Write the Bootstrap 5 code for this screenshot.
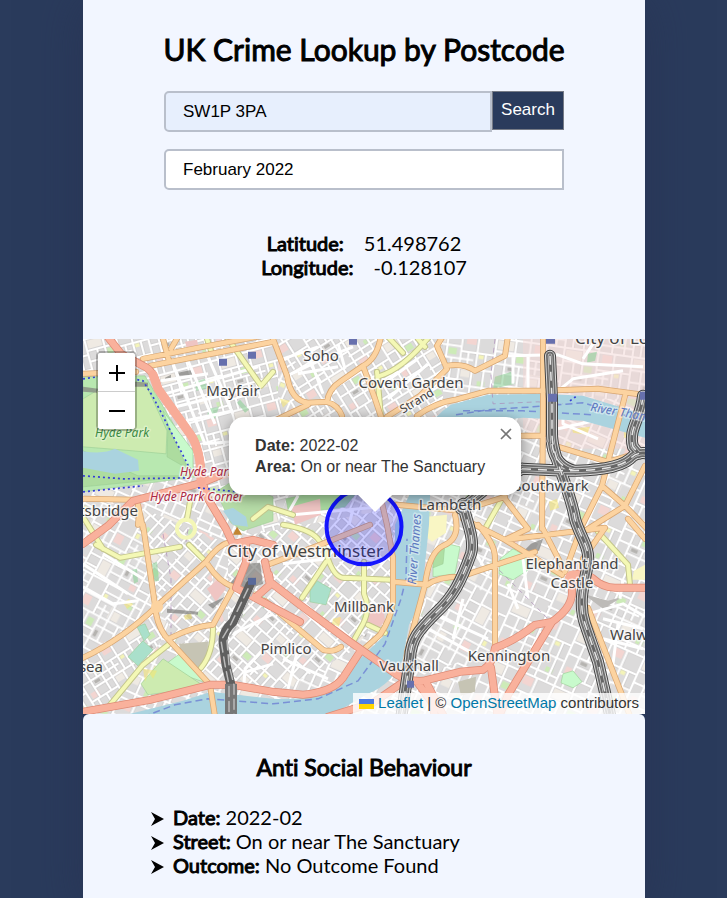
<!DOCTYPE html>
<html lang="en">
<head>
<meta charset="utf-8">
<meta name="viewport" content="width=device-width, initial-scale=1">
<title>UK Crime Lookup by Postcode</title>
<link href="https://cdn.jsdelivr.net/npm/bootstrap@5.3.0/dist/css/bootstrap.min.css" rel="stylesheet">
<style>
  body { background: #2a3b5c; color: #000; font: 400 20px/24px Lato, "Liberation Sans", sans-serif; font-variant-ligatures: none; padding: 0 82px 0 83px; }
  .panel { background: #f2f6ff; }
  .shell { box-shadow: 0 0 48px rgba(40, 48, 80, .6); }
  .faux { font-weight: 400; -webkit-text-stroke: 1px #000; }
  .lookup-head { padding: 30px 24px 60px; }
  .page-title { font-size: 30px; line-height: 38px; margin-bottom: 23px; }
  .lookup-form { max-width: 400px; gap: 17px; }
  .field { height: 41px; border: 2px solid #b9bfcb; border-radius: 5px 0 0 5px; padding: 0 17px; color: #000; font: 17px/20px "Liberation Sans", Arial, sans-serif; background: #fff; min-width: 0; }
  .field-filled { background: #e7effd; }
  .go { height: 39px; width: 72px; border: 1px solid #767b86; background: #2a3b5c; color: #fff; font: 17px/20px "Liberation Sans", Arial, sans-serif; padding: 0 0 2px; }
  .coords { margin-top: 41px; }
  .coords dl, .coords dd, .coords dt { margin: 0; }
  .coords dd { padding-left: 20px; }
  .map { aspect-ratio: 3 / 2; overflow: hidden; font-family: "Liberation Sans", Arial, sans-serif; }
  .zoomer { top: 12px; left: 13px; width: 41px; border: 2px solid rgba(0,0,0,.25); border-radius: 5px; background-clip: padding-box; background-color: #fff; overflow: hidden; }
  .zoomer button { height: 38px; border: 0; background: #fff; padding: 0 0 2px; }
  .zoomer button + button { border-top: 1px solid #ccc; }
  .bubble { left: 26%; top: 78px; width: 292px; padding: 18px 26px; border-radius: 15px; background: #fff; color: #333; box-shadow: 0 3px 14px rgba(0,0,0,.4); font-size: 16px; line-height: 21px; }
  .bubble-tip { top: 100%; left: 50%; width: 34px; height: 17px; margin-left: -17px; background: #fff; clip-path: polygon(0 0, 100% 0, 50% 100%); }
  .bubble-close { top: 7px; right: 5px; width: 20px; height: 20px; border: 0; background: none; padding: 0; line-height: 0; }
  .credit { right: 0; bottom: 0; background: rgba(255,255,255,.8); color: #333; font-size: 15px; line-height: 18px; padding: 1px 6px 2px; }
  .credit a { color: #0078a8; text-decoration: none; }
  .results { background: #2a3b5c; }
  .crime { border-radius: 6px 6px 0 0; padding: 39px 68px 20px; min-height: 200px; }
  .crime h2 { font-size: 23px; line-height: 29px; margin-bottom: 23px; }
  .crime li { gap: 9px; }
  .arrow { flex: none; width: 13px; height: 15px; margin-top: 6px; }
  .minor-edge { fill: none; stroke: #cbc9c9; stroke-width: 3; }
  .minor { fill: none; stroke: #fff; stroke-width: 2; }
  .lane { fill: none; stroke: #fff; stroke-width: 3; stroke-linejoin: round; }
  .road-line { fill: none; stroke-linecap: round; stroke-linejoin: round; }
  .place { font-family: "Noto Sans", sans-serif; font-size: 15px; fill: #444; stroke: #fff; stroke-opacity: .7; stroke-width: 3px; paint-order: stroke; stroke-linejoin: round; }
  .place-main { font-size: 17px; }
  .place-note { font-size: 12px; font-style: italic; }
  .place-park { fill: #3b8a45; stroke-opacity: .3; }
  .place-stop { fill: #ac2943; }
  .place-river { fill: #5d78c0; stroke-opacity: .4; }
  .place-street { font-size: 12px; }
</style>
<script src="https://cdn.jsdelivr.net/npm/bootstrap@5.3.0/dist/js/bootstrap.bundle.min.js" defer></script>
</head>
<body>
<main class="shell panel min-vh-100">
  <header class="lookup-head">
    <h1 class="page-title faux text-center">UK Crime Lookup by Postcode</h1>
    <form class="lookup-form d-flex flex-column mx-auto">
      <div class="d-flex align-items-start">
        <input class="field field-filled flex-grow-1" type="text" value="SW1P 3PA" aria-label="Postcode">
        <button class="go flex-shrink-0" type="button">Search</button>
      </div>
      <input class="field w-100" type="text" value="February 2022" aria-label="Month">
    </form>
    <div class="coords">
      <dl class="d-flex justify-content-center"><dt class="faux">Latitude:</dt><dd>51.498762</dd></dl>
      <dl class="d-flex justify-content-center"><dt class="faux">Longitude:</dt><dd>-0.128107</dd></dl>
    </div>
  </header>

  <section class="map position-relative" aria-label="Crime map">
    <svg class="d-block w-100 h-100" viewBox="0 0 562 375" preserveAspectRatio="xMidYMid slice" role="img" aria-label="Map of central London">
      <defs>
        <path id="streets" d="M0 1h62M0 13h32M32 17h30M0 24h44M12 32h50M0 43h33M30 48h32M1 0v54M11 13v30M19 0v24M24 24v20M32 0v54M39 17v13M47 0v32M44 32v22M55 17v37M8 43v11M18 43v11"/>
        <pattern id="grid" width="62" height="54" patternUnits="userSpaceOnUse">
          <rect width="62" height="54" fill="#dcdbdb"/>
          <path fill="#efeae3" d="M2 2h16v9H2zM34 30h12v10H34z"/><path fill="#cdebb8" d="M20 15h8v6h-8zM50 42h7v7h-7z"/><path fill="#f3d5d1" d="M36 2h9v8h-9zM4 35h9v6H4z"/><path fill="#f4f4b8" d="M48 18h5v4h-5z"/><path fill="#b5b3b0" d="M14 26h6v3h-6z"/>
          <use href="#streets" class="minor-edge"/><use href="#streets" class="minor"/>
        </pattern>
        <pattern id="g1" href="#grid" patternTransform="rotate(-15)"/>
        <pattern id="g2" href="#grid" patternTransform="rotate(-32)"/>
        <pattern id="g3" href="#grid" patternTransform="rotate(42)"/>
        <pattern id="g4" href="#grid" patternTransform="rotate(24) scale(1.15)"/>
        <pattern id="g5" href="#grid" patternTransform="rotate(-62) scale(1.1)"/>
        <pattern id="g6" href="#grid" patternTransform="rotate(8) scale(1.1)"/>
        <path id="red" d="M24-3 38 15 60 27Q71 31 75 50L107 95Q118 110 119 144L50 162 25 187 0 205M120 145 125 160 143 190 150 205 170 201 190 206M163 205 163 223 153 249 172 259 187 246 182 223M172 259 217 283M186 236 187 243 217 266 267 303 314 336Q326 343 340 342L377 333 400 331Q410 325 412 309Q430 303 452 286L469 283Q488 270 489 255V236Q500 233 509 239 520 249 532 249H562M469 283 425 356 415 380M408 329 415 380M0 373 67 361 127 346 150 346 190 353 220 356Q250 353 260 339L277 313M322 342 290 364 245 378M334 343 350 365 352 380M343 343 362 380M119 144 136 137"/>
        <path id="orange" d="M0 35 53 33M67 27 190 3M80 0 86 22M95-2 88 10M60 20 120 8 190-5M190 0 204 37Q208 62 225 64L244 63Q246 50 257 43L280 27Q294 20 298-3M244 63Q255 66 259 77M185 85 225 66M280 27 292 60 298 78M304 78 337 57 364 30 354 7 360-3M364 27Q380 24 392 32L422 17 425-3M334 77Q352 64 372 61L405 52 459 52 515 50 560 56M460-3 460 67 459 190M542 57 525 123 519 147 499 187 482 233M472 107 525 123 562 112M519 147 542 167 566 192M542 167 562 127M542 167 505 190M422 160 445 190 422 201M439 97H460M60 186 72 266Q73 284 82 297L127 346 132 378M0 319Q40 300 73 268L123 223Q135 206 147 203M125 226Q136 243 150 248M88 299Q110 288 130 286L150 249M182 262 240 311Q250 314 258 308M0 160 50 161M55 166 60 190M55 186 56 175M298 160 304 186 310 219 310 263Q308 280 297 296L279 312M310 243 344 246Q355 238 377 238L452 213M314 166 377 172 422 158M372 176Q378 200 360 207 346 214 342 246L324 313 322 340M395 186Q412 205 412 219V309M380 180 422 201 522 189M422 201 479 236M460 190 482 233M505 269 539 356 548 380M500 220 522 189M545 180 562 200M187 225 237 206 287 186"/>
        <path id="yellow" d="M123-3 128 12M143-3 178 47 190 33M13 206 37 219 97 208M107 163 104 180M106 206 123 223M130 289Q130 315 118 329M85 306 60 326 27 366M200 186Q225 190 234 199 242 208 245 220 252 240 262 239L307 241M243 223 219 259M281 223V255Q288 270 280 285L270 303M285 286 302 294M294 33 298 78M347-3Q320 30 297 37M304-3 320 14M335 0 342 8M419 160 402 190M515 193 545 226 547 246M0 178 20 210M560 70 552 82M170 180 185 168 210 176"/>
        <path id="rails" d="M467 17 469 60V95C469 118 487 150 492 180 497 198 507 208 505 224 503 240 494 260 502 285L515 323 528 380M439 130 482 132C510 132 535 130 547 120Q554 112 566 115M560 57C558 80 545 90 550 108L556 115M380 165C384 185 392 200 388 215 378 243 370 258 354 273 335 292 328 300 327 320L318 380M469 105Q472 128 492 132M378 170 405 148 439 130"/>
      </defs>
      <rect width="562" height="375" fill="url(#g4)"/>
      <path fill="url(#g1)" d="M0 0H195V60L220 110 190 200 120 150 60 35H0z"/>
      <path fill="url(#g2)" d="M190 0H365V90H215z"/>
      <path fill="url(#g6)" d="M360 0H562V60H360z"/>
      <path fill="#f4d7d5" fill-opacity=".5" d="M440 0H562V110H470L440 90z"/>
      <path fill="url(#g5)" d="M0 160 60 170 73 268 0 319zM345 250 412 220 412 310 330 340z"/>
      <path fill="url(#g3)" d="M60 170 145 205 75 268zM75 270 125 225 160 350 127 346zM145 200 310 170 310 260 270 312 190 355 145 345z"/>
      <path fill="url(#g2)" d="M0 319 73 268 80 300 27 373H0z"/>

      <!-- parks and open ground -->
      <g stroke="#9bcc94" stroke-width=".6">
        <path fill="#b8e8b0" d="M0 38 62 37 108 115 112 138 0 153z"/>
        <path fill="#cdebb0" d="M30 42 62 44 84 92 83 115 50 112 0 108V60z"/>
        <path fill="#c8facc" d="M80 72 110 112V131L98 120z"/>
        <path fill="#addc9f" d="M0 112 55 137H112L0 148zM85 88 105 130 84 118z"/>
        <path fill="#b7dda8" d="M133 153 150 142 190 158V182L160 192 148 184z"/>
        <path fill="#a9d9a0" d="M203 160 225 155 275 152 262 168 206 176z"/>
        <path fill="#c8facc" d="M98 314 123 344 103 337 83 325z"/>
        <path fill="#cdebb0" d="M80 320 122 348 65 356 58 345z"/>
        <path fill="#aae0cb" d="M45 318 60 302 70 311 55 327zM227 252 234 242 248 250 243 266 227 263zM54 288 62 285 67 296 61 302z"/>
        <path fill="#c8facc" d="M417 220 430 210 443 217 447 230 430 241 416 235zM480 335 490 332 499 343 490 349 478 344zM350 215 365 205 377 208 372 235 350 238z"/>
        <path fill="#aedfa3" d="M351 213 362 204 360 225 350 229z"/>
      </g>
      <path fill="#c6c4b4" d="M96 305 125 303 124 326 116 331 99 320zM375 343 393 338 392 353 378 357z"/>
      <path fill="#efc5c3" d="M102 3 114 1 116 10 105 13zM124 250 138 238 143 250 133 263zM287 268 300 265 302 282 294 292 284 285zM208 168 237 160 238 176 212 186z"/>
      <path fill="#f9f6c4" d="M344 178 364 176 363 194 349 203 343 198zM551 232 562 226V241H549z"/>
      <path fill="#bdbbb8" d="M500 255 525 262 540 258 520 270z"/>
      <path fill="#8fd09a" opacity=".6" d="M112 43 122 40 124 50 113 52zM154 64 157 61 166 71 162 74zM505 15 514 13 512 22 504 24zM412 38 428 33 432 45 410 50zM126 70 136 68 132 80 124 77zM69 225 74 223 76 242 71 243zM49 231 54 230 55 243 51 245zM178 255 187 263 180 270z"/>
      <g fill="#f5e66f" opacity=".55"><path d="M40 264 46 260 50 266 44 270zM101 277 108 274 109 280 102 281zM250 280 258 278 256 288 249 285zM489 90 507 88 504 96 490 94zM466 163 474 160 476 169 467 172zM60 330 74 332 70 340 66 334 62 343zM197 60 207 62 200 69zM541 91 548 99 541 99z"/></g>
      <g fill="#80807e" opacity=".7"><path d="M440 213 448 205 460 200 456 212zM82 39 88 36 88 41 82 42zM95 34 109 31 109 36 96 37zM52 43 65 44 65 48 52 48zM0 48 15 50 14 54 0 53zM84 270 115 273V276L84 274zM163 225 177 224 180 245 162 252 145 247zM125 266 142 258 130 270z"/></g>

      <!-- wider local streets -->
      <path class="lane" d="M204 37 240 20 270 8M200 20 235 8M215 35 255 28M225 15 240 55M255 5 262 30M305 60 345 25M315 70 355 45M300 45 335 20M422 17 475 16 500 25 560 28M500 20 510 5M475 52 490 40 540 32M430 17V45M445 17V50M480 60V85L515 100M475 90 520 80M390 210 405 235M505 275 540 265 562 278M537 260 540 240M345 290 400 320M350 275 405 300M380 260 370 300M425 245 435 270M440 220 445 260M520 280 560 290M520 300 560 310M535 285 530 325M0 248 30 265 55 262M0 225 45 255M20 215 60 240M190 275 150 295 135 291M190 300 162 330 161 345M190 325 163 333M200 320 245 340M215 310 205 350M240 205 300 225M200 225 245 220M90 25 122 105M105 22 132 85M78 42 125 35M82 55 175 28M93 68 165 50M103 82 150 72M120 105 150 103M125 18 150 75M203 178 215 157M210 176 298 168M270 170 266 186"/>

      <!-- water -->
      <path fill="#aad3df" d="M-2 112Q20 116 32 110L55 121 56 132 32 135 0 129zM140 172 150 169 163 178 165 188 150 186zM35 378 100 362 128 353 190 360Q245 362 262 343L277 320 300 298Q312 275 312 246V186L326 157Q330 90 368 66L405 56 460 55 500 57 562 76V99L500 82 440 79 390 84Q352 98 347 157L346 186 340 246Q336 270 326 286L320 320Q310 345 285 355L245 378z"/>
      <path fill="none" stroke="#6473d2" stroke-width="1.5" stroke-dasharray="7 4" opacity=".7" d="M60 378 92 366 125 360 190 365 235 360 275 342 302 305 318 260 323 240 324 200M373 76 405 71 450 68 500 64 560 82M380 72 440 72 510 76"/>
      <path fill="none" stroke="#a985b5" stroke-dasharray="5 4" opacity=".65" d="M412 0 408 35 410 65 455 63 480 65M80 195 88 240 88 300M410 225 440 255 470 285 450 320M105 190 103 203"/>

      <use href="#yellow" class="road-line" stroke="#c3c58c" stroke-width="6"/>
      <circle cx="103" cy="190" r="9" class="road-line" stroke="#f4f7b7" stroke-width="4"/>
      <use href="#yellow" class="road-line" stroke="#f4f8b5" stroke-width="4"/>
      <use href="#orange" class="road-line" stroke="#d7a673" stroke-width="6"/>
      <use href="#orange" class="road-line" stroke="#fcd3a0" stroke-width="4.5"/>
      <use href="#red" class="road-line" stroke="#de8b76" stroke-width="8"/>
      <use href="#red" class="road-line" stroke="#f9b19c" stroke-width="6.5"/>
      <path class="road-line" stroke="#f8ac98" stroke-width="9" d="M70 36 75 50 107 95Q118 110 118 143"/>
      <circle cx="74" cy="268" r="6" fill="#fcd3a0"/><circle cx="489" cy="239" r="7" fill="#f9b19c"/>

      <!-- railways -->
      <use href="#rails" class="road-line" stroke="#444" stroke-width="12"/>
      <use href="#rails" class="road-line" stroke="#d9d9d9" stroke-width="10"/>
      <use href="#rails" class="road-line" stroke="#6b6b6b" stroke-width="8"/>
      <use href="#rails" class="road-line" stroke="#c9c9c9" stroke-width="4.5"/>
      <use href="#rails" class="road-line" stroke="#666" stroke-width="3"/>
      <use href="#rails" fill="none" stroke="#e4e4e4" stroke-width="1.5" stroke-dasharray="9 7"/>
      <g class="road-line"><path stroke="#5f5f5f" stroke-width="9" d="M167 246 150 283Q140 292 140 302L143 326 148 346"/><path stroke="#777" stroke-width="12" stroke-linecap="butt" d="M148 345V378"/><path stroke="#bbb" stroke-width="1.5" stroke-dasharray="10 5" d="M165 250 148 285 138 302 142 326 146 346V376M172 248 155 285 144 302 146 326 151 346V376"/></g>
      <path fill="none" stroke="#353fd6" stroke-width="1.7" stroke-dasharray="2 3" d="M0 40 30 36 60 42 70 58 108 132M0 137 40 140 108 139M0 153 60 147M115 149 155 153M487 62 494 57"/>
      <g fill="#6770ad"><path d="M136 20h8v7h-8zM165 13h8v7h-8zM463 0h9v5h-9zM465 55h9v8h-9zM557 53h9v8h-9zM324 342h7v7h-7zM266 0h8v6h-8z"/><path fill="#58699a" d="M165 239h8v7h-8z"/></g>
      <path fill="#c28532" d="m154 188 5 8h-9z"/>

      <g text-anchor="middle">
        <text class="place" x="238" y="22">Soho</text><text class="place" x="150" y="57">Mayfair</text><text class="place" x="328" y="49">Covent Garden</text>
        <text class="place" x="468" y="152">Southwark</text><text class="place" x="367" y="171">Lambeth</text><text class="place place-main" x="222" y="218">City of Westminster</text>
        <text class="place" x="281" y="273">Millbank</text><text class="place" x="203" y="315">Pimlico</text><text class="place" x="326" y="332">Vauxhall</text><text class="place" x="426" y="322">Kennington</text>
        <text class="place" x="489" y="230">Elephant and</text><text class="place" x="489" y="249">Castle</text>
      </g>
      <text class="place place-main" x="492" y="5">City of London</text><text class="place" x="527" y="301">Walworth</text>
      <g text-anchor="end"><text class="place" x="55" y="177">Knightsbridge</text><text class="place" x="20" y="333">Chelsea</text></g>
      <text class="place place-note place-park" x="12" y="98">Hyde Park</text>
      <text class="place place-note place-stop" x="97" y="137">Hyde Park</text>
      <text class="place place-note place-stop" x="67" y="162">Hyde Park Corner</text>
      <text class="place place-note place-river" transform="translate(507 72) rotate(10)">River Thames</text>
      <text class="place place-note place-river" transform="translate(333 246) rotate(-86)">River Thames</text>
      <text class="place place-street" transform="translate(320 75) rotate(-31)">Strand</text>
      <circle cx="281" cy="188" r="37.5" fill="#00f" fill-opacity=".2" stroke="#00f" stroke-opacity=".9" stroke-width="4"/>
    </svg>

    <div class="zoomer position-absolute d-flex flex-column">
      <button type="button" aria-label="Zoom in"><svg width="18" height="18" viewBox="0 0 18 18"><path d="M9 1v16M1 9h16" stroke="#000" stroke-width="2"/></svg></button>
      <button type="button" aria-label="Zoom out"><svg width="18" height="18" viewBox="0 0 18 18"><path d="M1 9h16" stroke="#000" stroke-width="2"/></svg></button>
    </div>

    <div class="bubble position-absolute">
      <div><b>Date:</b> 2022-02</div>
      <div><b>Area:</b> On or near The Sanctuary</div>
      <button class="bubble-close position-absolute" type="button" aria-label="Close"><svg width="12" height="12" viewBox="0 0 12 12"><path d="m1 1 10 10M11 1 1 11" stroke="#757575" stroke-width="1.6"/></svg></button>
      <span class="bubble-tip position-absolute"></span>
    </div>

    <div class="credit position-absolute text-nowrap"><a href="#leaflet"><svg width="15" height="10" viewBox="0 0 15 10" aria-hidden="true"><path fill="#4c7be1" d="M0 0h15v5H0z"/><path fill="#ffd500" d="M0 5h15v5H0z"/></svg> Leaflet</a> | © <a href="#osm">OpenStreetMap</a> contributors</div>
  </section>

  <div class="results">
    <section class="crime panel">
      <h2 class="faux text-center">Anti Social Behaviour</h2>
      <ul class="list-unstyled mb-0">
        <li class="d-flex"><svg class="arrow" viewBox="0 0 13 15" aria-hidden="true"><path d="M0 1 13 8 0 15 4 8z"/></svg><span><span class="faux">Date:</span> 2022-02</span></li>
        <li class="d-flex"><svg class="arrow" viewBox="0 0 13 15" aria-hidden="true"><path d="M0 1 13 8 0 15 4 8z"/></svg><span><span class="faux">Street:</span> On or near The Sanctuary</span></li>
        <li class="d-flex"><svg class="arrow" viewBox="0 0 13 15" aria-hidden="true"><path d="M0 1 13 8 0 15 4 8z"/></svg><span><span class="faux">Outcome:</span> No Outcome Found</span></li>
      </ul>
    </section>
  </div>
</main>
</body>
</html>
